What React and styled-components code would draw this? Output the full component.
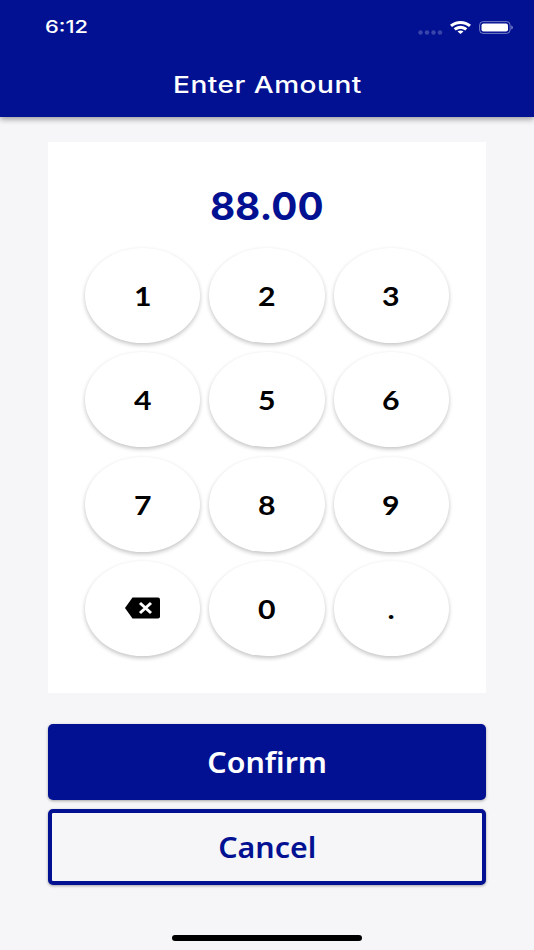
import React from "react"
import styled, { createGlobalStyle } from "styled-components"

const NAVY = "#021192"
const KEYS = ["1", "2", "3", "4", "5", "6", "7", "8", "9", "back", "0", "."]

const GlobalStyle = createGlobalStyle`
  html, body {
    margin: 0;
    padding: 0;
    background: #f6f6f9;
  }
  * {
    box-sizing: border-box;
  }
`

const Page = styled.div`
  width: 534px;
  height: 950px;
  overflow: hidden;
  display: flex;
  flex-direction: column;
  align-items: center;
  background: #f6f6f9;
  font-family: "Lato", sans-serif;
`

// the reference is an iPhone shot squeezed into this window, so text runs wide
const Wide = styled.span`
  display: inline-block;
  transform: scaleX(${props => props.$x});
`

const Header = styled.header`
  width: 100%;
  height: 117px;
  flex: none;
  background: ${NAVY};
  box-shadow: 0 2px 6px rgba(0, 0, 0, 0.4);
  color: #fff;
`

const StatusBar = styled.div`
  height: 70px;
  padding: 17px 21px 0 45px;
  display: flex;
  justify-content: space-between;
  align-items: flex-start;
`

const Time = styled.span`
  font-family: "Inter", sans-serif;
  font-size: 17.5px;
  line-height: 20px;
  font-weight: 500;
  transform: scaleX(1.25);
  transform-origin: left center;
`

const StatusIcons = styled.div`
  height: 20px;
  display: flex;
  align-items: center;
`

const Dots = styled.svg`
  margin: 10px 7px 0 0;
`

const WifiIcon = styled.svg`
  margin-right: 8px;
`

const Title = styled.h1`
  margin: 0;
  text-align: center;
  font-family: "Inter", sans-serif;
  font-size: 23px;
  line-height: 30px;
  font-weight: 500;
  letter-spacing: 0.4px;
`

const Card = styled.section`
  width: 438px;
  height: 551px;
  margin-top: 25px;
  flex: none;
  background: #fff;
  padding-top: 39px;
`

const Amount = styled.div`
  height: 67px;
  text-align: center;
  color: ${NAVY};
  font-family: "Inter", sans-serif;
  font-size: 38px;
  line-height: 50px;
  font-weight: 650;
`

const Keypad = styled.div`
  display: grid;
  grid-template-columns: repeat(3, 115.5px);
  grid-auto-rows: 95px;
  column-gap: 8.8px;
  row-gap: 9.4px;
  justify-content: center;
`

const Key = styled.button`
  border: 0;
  padding: 0;
  border-radius: 50%;
  background: #fff;
  color: #000;
  box-shadow: 0 2px 4px rgba(0, 0, 0, 0.24);
  display: flex;
  align-items: center;
  justify-content: center;
  font-family: "Lato", sans-serif;
  font-size: 27px;
  font-weight: 700;
`

const Actions = styled.div`
  width: 438px;
  margin-top: 31px;
  display: flex;
  flex-direction: column;
  gap: 9px;
`

const ActionButton = styled.button`
  height: 76px;
  padding: 0;
  border-radius: 5px;
  border: ${props => (props.$outlined ? `4px solid ${NAVY}` : "0")};
  background: ${props => (props.$outlined ? "#f6f6f9" : NAVY)};
  color: ${props => (props.$outlined ? NAVY : "#fff")};
  box-shadow: 0 1px 3px rgba(0, 0, 0, 0.35);
  font-family: "Noto Sans", sans-serif;
  font-size: 28px;
  font-weight: 600;
`

const HomeIndicator = styled.div`
  width: 190px;
  height: 6px;
  margin-top: 50px;
  flex: none;
  border-radius: 3px;
  background: #000;
`

const BackspaceSvg = styled.svg`
  margin: -2px 0 0 -1px;
`

const SignalDots = () => (
  <Dots width="25" height="5" viewBox="0 0 25 5">
    {[2.5, 9, 15.5, 22].map(x => (
      <circle key={x} cx={x} cy="2.5" r="2.2" fill="#fff" opacity="0.22" />
    ))}
  </Dots>
)

const Wifi = () => (
  <WifiIcon width="21" height="13" viewBox="0 0 21 13" fill="#fff">
    <path d="M10.500 0C6.500 0 3 1.400 0 3.800l2 2.300C4.400 4.200 7.300 3 10.500 3s6.100 1.200 8.500 3.100l2-2.300C18 1.400 14.500 0 10.500 0z" />
    <path d="M10.500 4.800c-2.500 0-4.800.9-6.800 2.400l2 2.300c1.300-1 3-1.600 4.800-1.600s3.500.6 4.800 1.600l2-2.300c-2-1.500-4.300-2.400-6.800-2.400z" />
    <path d="M10.500 9.600c-1.100 0-2.100.3-3 .9l3 2.500 3-2.500c-.9-.6-1.900-.9-3-.9z" />
  </WifiIcon>
)

const Battery = () => (
  <svg width="34" height="13" viewBox="0 0 34 13">
    <rect x="0.600" y="0.600" width="30.500" height="11.800" rx="3.500" fill="none" stroke="#fff" strokeOpacity="0.45" />
    <rect x="2.500" y="2.500" width="26.500" height="8" rx="2" fill="#fff" />
    <path d="M32.300 4.500v4c.9-.3 1.500-1.100 1.500-2s-.6-1.700-1.500-2z" fill="#fff" opacity="0.5" />
  </svg>
)

const BackspaceIcon = () => (
  <BackspaceSvg width="35" height="22" viewBox="0 0 35 22">
    <path d="M7.500 0.500H33a2 2 0 0 1 2 2V19.500a2 2 0 0 1-2 2H7.500L0 11z" fill="#000" />
    <path d="M15 6l11 10M26 6l-11 10" stroke="#fff" strokeWidth="3" fill="none" />
  </BackspaceSvg>
)

export default function App() {
  return (
    <Page>
      <GlobalStyle />
      <Header>
        <StatusBar>
          <Time>6:12</Time>
          <StatusIcons>
            <SignalDots />
            <Wifi />
            <Battery />
          </StatusIcons>
        </StatusBar>
        <Title><Wide $x={1.22}>Enter Amount</Wide></Title>
      </Header>
      <Card>
        <Amount><Wide $x={1.02}>88.00</Wide></Amount>
        <Keypad>
          {KEYS.map(key => (
            <Key key={key}>
              {key === "back" ? <BackspaceIcon /> : <Wide $x={1.12}>{key}</Wide>}
            </Key>
          ))}
        </Keypad>
      </Card>
      <Actions>
        <ActionButton><Wide $x={1.085}>Confirm</Wide></ActionButton>
        <ActionButton $outlined><Wide $x={1.085}>Cancel</Wide></ActionButton>
      </Actions>
      <HomeIndicator />
    </Page>
  )
}
